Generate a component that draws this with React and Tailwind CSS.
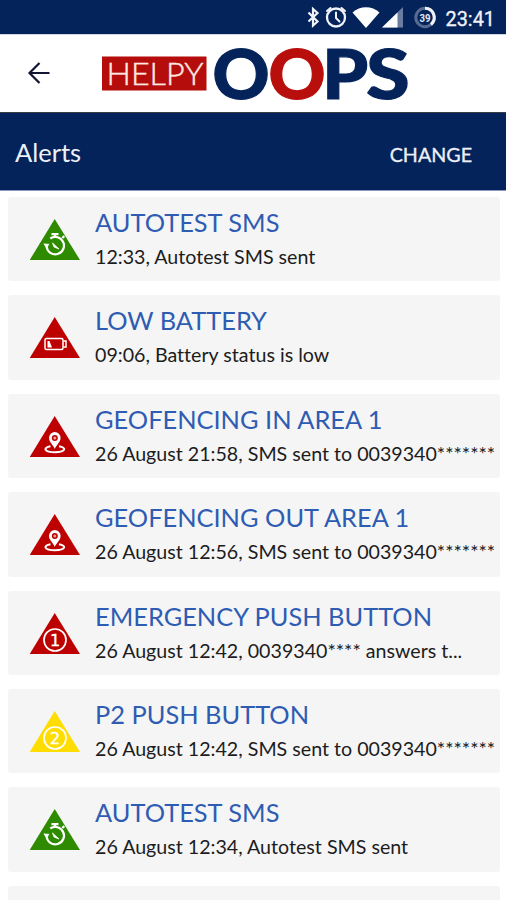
import React from "react";

const FONT = "font-['Lato','Open_Sans',sans-serif]";

function StatusBar() {
  return (
    <div className="flex h-[34px] shrink-0 items-center bg-[#04235a]">
      <svg width="506" height="34" viewBox="0 0 506 34" className="block font-['Roboto',sans-serif]">
        <path d="M308.500 12.500L317.500 21.500L313 25.500V9L317.500 13L308.500 21.500" fill="none" stroke="#f1f3f8" strokeWidth="2.200" />
        <g fill="none" stroke="#f1f3f8" strokeLinecap="round">
          <circle cx="336" cy="17.500" r="9" strokeWidth="2.300" />
          <path d="M336 12.500V18L339.500 21.500" strokeWidth="2" />
          <path d="M327 11L330.500 8M345 11L341.500 8" strokeWidth="2" />
        </g>
        <path d="M352.500 12.500C360 5.500 372 5.500 379.500 12.500L366 28Z" fill="#fff" />
        <path d="M382 27.500L403 7V27.500Z" fill="#6a7c9f" />
        <path d="M382 27.500L397.500 12.500V27.500Z" fill="#fff" />
        <circle cx="425" cy="17.500" r="9.200" fill="none" stroke="#566a92" strokeWidth="3" />
        <path d="M425 8.300A9.200 9.200 0 0 1 431 24.500" fill="none" stroke="#f1f3f8" strokeWidth="3" />
        <text x="425" y="21.500" textAnchor="middle" fontSize="11" fontWeight="700" fill="#e4e8f0" textLength="11" lengthAdjust="spacingAndGlyphs">39</text>
        <text x="445.500" y="25.500" fontSize="21" fill="#f1f3f8" stroke="#f1f3f8" strokeWidth="0.300" textLength="49.500" lengthAdjust="spacingAndGlyphs">23:41</text>
      </svg>
    </div>
  );
}

function Header() {
  return (
    <header className="flex h-[79px] shrink-0 items-center border-t border-b border-t-[#d3d3e6] border-b-[#3a3c44] bg-white">
      <svg width="506" height="77" viewBox="0 35 506 77" className={`block overflow-visible ${FONT}`}>
        <path d="M49.500 73H29.500M39.500 63L29.500 73L39.500 83" fill="none" stroke="#111633" strokeWidth="2.200" />
        <rect x="102" y="56.500" width="104.500" height="34" fill="#b40d0b" />
        <text x="106.500" y="84.500" fontSize="30.500" fontWeight="300" fill="#ffe9e2" stroke="#ffe9e2" strokeWidth="0.400" textLength="97" lengthAdjust="spacingAndGlyphs">HELPY</text>
        <g fontSize="69" fontWeight="900" fill="#04235a" stroke="#04235a" strokeWidth="1.200">
          <text transform="translate(212.400 98.700) scale(1.020 1)">O</text>
          <text transform="translate(268.400 98.700) scale(1.020 1)" fill="#b90f0c" stroke="#b90f0c">O</text>
          <text transform="translate(322.300 98.700) scale(1.060 1)">P</text>
          <text transform="translate(366.300 98.700) scale(1.140 1)">S</text>
        </g>
      </svg>
    </header>
  );
}

function Stopwatch() {
  return (
    <g fill="none" stroke="#fff">
      <path d="M20.300 19.500A8.700 8.700 0 1 1 16.600 27.500" strokeWidth="2.200" />
      <path d="M21.500 15.200H28.500M25 15.500V18.500M32.300 19L34.300 17.200" strokeWidth="2.300" />
      <path d="M13.800 24.800L19 25.200L16.600 29.300Z" fill="#fff" strokeWidth="0.500" />
      <path d="M22.500 24L29 30L24 28Z" fill="#fff" strokeWidth="0.800" />
    </g>
  );
}

function Battery() {
  return (
    <g fill="none" stroke="#fff" strokeWidth="1.500">
      <rect x="15" y="21.500" width="18" height="11" rx="1.500" />
      <path d="M33.500 24H36V30H33.500" />
      <path d="M17.500 24H19.500L22 30.500H17.500Z" fill="#fff" stroke="none" />
    </g>
  );
}

function Pin() {
  return (
    <g>
      <path d="M20.500 30.200C12.500 31.500 14 36.200 25 36.200S37 31.500 29 30.200" fill="none" stroke="#fff" strokeWidth="2" />
      <path d="M24.800 33C23.500 29 19 26.500 19 21.800A5.800 5.800 0 0 1 30.600 21.800C30.600 26.500 26.200 29 24.800 33Z" fill="#fff" />
      <circle cx="24.800" cy="21.900" r="3" fill="#bd0000" />
      <circle cx="24.800" cy="21.900" r="1.500" fill="#e79a94" />
    </g>
  );
}

function Numbered({ n }) {
  return (
    <g>
      <circle cx="25" cy="27" r="11" fill="none" stroke="#fff" strokeWidth="1.700" />
      <text x="25" y="32.500" textAnchor="middle" fontSize="16" fontWeight="400" fill="#fff" stroke="#fff" strokeWidth="0.400" className="font-['DejaVu_Sans',sans-serif]">{n}</text>
    </g>
  );
}

const glyphs = {
  watch: <Stopwatch />,
  battery: <Battery />,
  pin: <Pin />,
  one: <Numbered n="1" />,
  two: <Numbered n="2" />,
};

const alerts = [
  { title: "AUTOTEST SMS", text: "12:33, Autotest SMS sent", icon: "watch", color: "#2e8b00" },
  { title: "LOW BATTERY", text: "09:06, Battery status is low", icon: "battery", color: "#bd0000" },
  { title: "GEOFENCING IN AREA 1", text: "26 August 21:58, SMS sent to 0039340*******", icon: "pin", color: "#bd0000" },
  { title: "GEOFENCING OUT AREA 1", text: "26 August 12:56, SMS sent to 0039340*******", icon: "pin", color: "#bd0000" },
  { title: "EMERGENCY PUSH BUTTON", text: "26 August 12:42, 0039340**** answers t...", icon: "one", color: "#bd0000" },
  { title: "P2 PUSH BUTTON", text: "26 August 12:42, SMS sent to 0039340*******", icon: "two", color: "#ffdd00" },
  { title: "AUTOTEST SMS", text: "26 August 12:34, Autotest SMS sent", icon: "watch", color: "#2e8b00" },
];

function AlertCard({ alert }) {
  return (
    <li className="flex h-[84.420px] shrink-0 rounded-[3px] bg-[#f5f5f5]">
      <svg width="50" height="42" viewBox="0 0 50 42" className="mt-[22px] ml-[22px] shrink-0">
        <path d="M24.700 0L50 41H-0.300Z" fill={alert.color} />
        {glyphs[alert.icon]}
      </svg>
      <div className="ml-[15px] whitespace-nowrap">
        <h2 className="mt-[9px] text-[25.400px] leading-8 text-[#2f5cb3]">{alert.title}</h2>
        <p className="mt-[7px] text-[19.640px] leading-6 text-[#1c1c1c] [font-variant-ligatures:none]">{alert.text}</p>
      </div>
    </li>
  );
}

export default function App() {
  return (
    <div className={`flex h-[900px] w-[506px] flex-col overflow-hidden bg-white ${FONT}`}>
      <StatusBar />
      <Header />
      <div className="flex h-[78px] shrink-0 items-center justify-between border-b border-[#8d97c0] bg-[#04235a] pr-[34px] pl-[15px] text-[#eef0f8]">
        <h1 className="mt-px text-[25.500px] leading-8">Alerts</h1>
        <button className="mt-[7px] text-[19.700px] leading-6 [-webkit-text-stroke:0.300px_#eef0f8]">CHANGE</button>
      </div>
      <ul className="flex flex-col gap-[14px] pt-[6px] pr-[6px] pl-2">
        {alerts.map((alert, i) => (
          <AlertCard key={i} alert={alert} />
        ))}
        <li className="h-[84px] shrink-0 rounded-[3px] bg-[#f5f5f5]" />
      </ul>
    </div>
  );
}
